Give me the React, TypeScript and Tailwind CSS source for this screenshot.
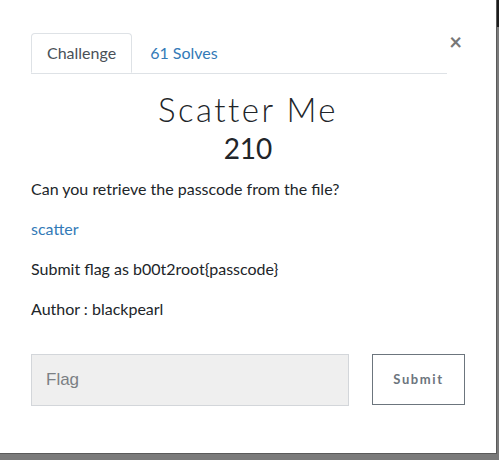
import React from "react";

const App = () => {
  return (
    <div className="flex h-[460px] w-[499px] bg-[#7a7a7a]" style={{ fontFamily: "Lato, 'Liberation Sans', sans-serif" }}>
      <div className="flex h-[454px] w-[497px] flex-col border-b border-r border-[#5a5a5a] bg-white">
        <div className="flex items-start pl-[31px] pr-[34px] pt-[33px]">
          <div className="flex flex-1 border-b border-[#dee2e6]">
            <div className="-mb-px flex h-[40px] items-center rounded-t border border-b-white border-[#dee2e6] bg-white px-[15px] text-[16px] text-[#495057]">
              Challenge
            </div>
            <div className="flex h-[40px] items-center px-[18px] text-[16px] text-[#337ab7]">
              61 Solves
            </div>
          </div>
          <div className="ml-[2px] mt-[-2px] text-[22px] font-bold leading-none text-[#777]">×</div>
        </div>

        <div className="mt-[15px] text-center text-[33px] font-light leading-[40px] tracking-[2.5px] text-[#212529]">
          Scatter Me
        </div>
        <div className="mt-[2px] text-center text-[28px] font-normal leading-[34px] text-[#212529]">210</div>

        <div className="mt-[12px] flex flex-col gap-[16px] pl-[31px] text-[16px] leading-[24px] text-[#212529]">
          <p>Can you retrieve the passcode from the file?</p>
          <a href="#" className="text-[#337ab7]">scatter</a>
          <p>Submit flag as b00t2root{"{passcode}"}</p>
          <p>Author : blackpearl</p>
        </div>

        <div className="mt-[33px] flex items-start pl-[31px]">
          <div
            className="flex h-[52px] w-[318px] items-center border border-[#d3d6da] bg-[#efefef] pl-[14px] text-[17px] text-[#7b7f84]"
            style={{ fontFamily: "'Liberation Sans', Arial, sans-serif" }}
          >
            Flag
          </div>
          <button className="ml-[23px] flex h-[51px] w-[93px] items-center justify-center border border-[#6c757d] bg-white text-[13px] font-bold tracking-[1.6px] text-[#6c757d]">
            Submit
          </button>
        </div>
      </div>
      <div className="flex w-[2px] flex-col">
        <div className="h-[27px] bg-[#1c1c1c]" />
        <div className="flex-1 bg-[#7a7a7a]" />
      </div>
    </div>
  );
};

export default App;
